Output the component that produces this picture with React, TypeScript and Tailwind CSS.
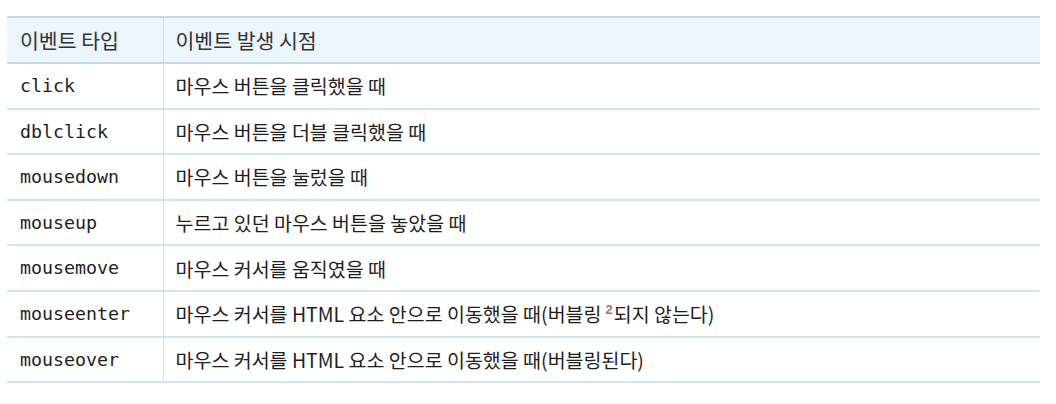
const rows: { type: string; desc: React.ReactNode }[] = [
  { type: "click", desc: "마우스 버튼을 클릭했을 때" },
  { type: "dblclick", desc: "마우스 버튼을 더블 클릭했을 때" },
  { type: "mousedown", desc: "마우스 버튼을 눌렀을 때" },
  { type: "mouseup", desc: "누르고 있던 마우스 버튼을 놓았을 때" },
  { type: "mousemove", desc: "마우스 커서를 움직였을 때" },
  {
    type: "mouseenter",
    desc: (
      <>
        마우스 커서를 HTML 요소 안으로 이동했을 때(버블링
        <sup
          className="text-[13px] font-bold text-[#a8765c] ml-[4px] mr-[1px] relative -top-[8px]"
          style={{ fontFamily: '"Liberation Sans", Arial, sans-serif' }}
        >
          2
        </sup>
        되지 않는다)
      </>
    ),
  },
  { type: "mouseover", desc: "마우스 커서를 HTML 요소 안으로 이동했을 때(버블링된다)" },
];

export default function App() {
  return (
    <div className="w-[1056px] h-[404px] bg-white pt-4 pl-[7px]">
      <table
        className="w-[1033px] border-collapse text-[#1e1e1e] text-[19.5px]"
        style={{ fontFamily: '"Noto Sans CJK KR", "Noto Sans", sans-serif' }}
      >
        <thead>
          <tr className="bg-[#ecf4fc] h-[46px] border-y-2 border-[#bcdcf3]">
            <th className="w-[156px] border-r border-[#c9e2f5] pl-[13px] text-left font-normal text-[#333] text-[20.5px]">
              이벤트 타입
            </th>
            <th className="pl-3 text-left font-normal text-[#333] text-[20.5px]">이벤트 발생 시점</th>
          </tr>
        </thead>
        <tbody>
          {rows.map((r) => (
            <tr key={r.type} className="h-[45.6px] border-b-2 border-[#cfe6f7]">
              <td
                className="border-r border-[#c9e2f5] pl-[13px] text-[18.3px]"
                style={{ fontFamily: '"DejaVu Sans Mono", monospace' }}
              >
                {r.type}
              </td>
              <td className="pl-3">{r.desc}</td>
            </tr>
          ))}
        </tbody>
      </table>
    </div>
  );
}
